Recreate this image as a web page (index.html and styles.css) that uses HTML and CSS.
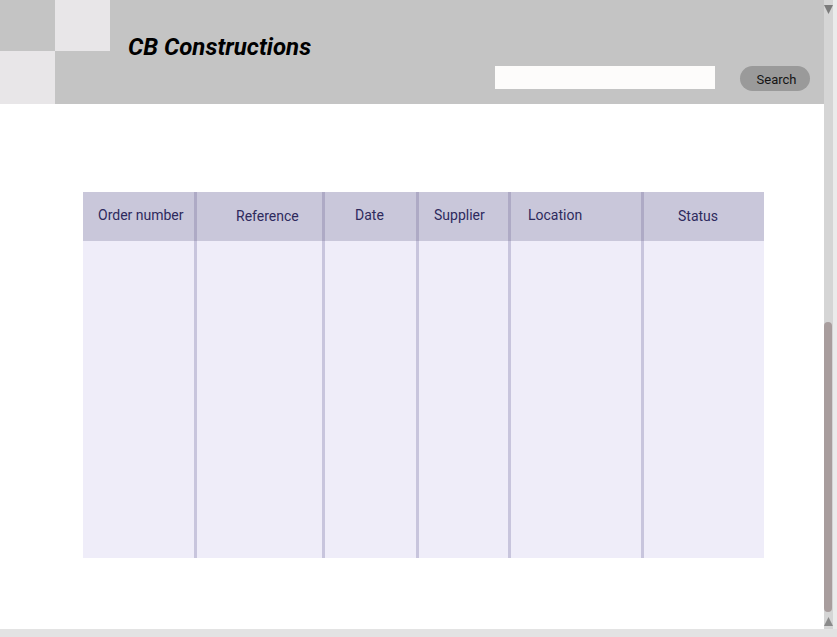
FILE: index.html
```html
<!DOCTYPE html>
<html lang="en">
<head>
<meta charset="utf-8">
<title>CB Constructions</title>
<link rel="stylesheet" href="styles.css">
</head>
<body>
<div class="app">
  <div class="viewport">
    <div class="page">
      <header class="topbar">
        <div class="logo">
          <span class="sq dark"></span><span class="sq light"></span>
          <span class="sq light"></span><span class="sq dark"></span>
        </div>
        <h1 class="brand">CB Constructions</h1>
        <form class="search">
          <input class="search-input" type="text" aria-label="Search">
          <button class="search-btn" type="button">Search</button>
        </form>
      </header>
      <main class="content">
        <div class="orders">
          <div class="col c1"><div class="th">Order number</div><div class="td"></div></div>
          <div class="col c2"><div class="th">Reference</div><div class="td"></div></div>
          <div class="col c3"><div class="th">Date</div><div class="td"></div></div>
          <div class="col c4"><div class="th">Supplier</div><div class="td"></div></div>
          <div class="col c5"><div class="th">Location</div><div class="td"></div></div>
          <div class="col c6"><div class="th">Status</div><div class="td"></div></div>
        </div>
      </main>
    </div>
    <div class="vscroll">
      <svg class="arrow arrow-top" width="9" height="9" viewBox="0 0 9 9"><polygon points="0,0 9,0 4.5,9" /></svg>
      <div class="track-space"></div>
      <div class="thumb"></div>
      <svg class="arrow arrow-bottom" width="9" height="9" viewBox="0 0 9 9"><polygon points="4.5,0 9,9 0,9" /></svg>
    </div>
  </div>
  <div class="hscroll"></div>
</div>
</body>
</html>
```
FILE: styles.css
```css
html, body {
  margin: 0;
  padding: 0;
  background: #ffffff;
}
body {
  font-family: Roboto, "Liberation Sans", Arial, sans-serif;
  width: 837px;
  height: 637px;
  overflow: hidden;
}
.app {
  display: flex;
  flex-direction: column;
  width: 837px;
  height: 637px;
}
.viewport {
  display: flex;
  height: 629px;
}
.page {
  width: 824px;
  display: flex;
  flex-direction: column;
  background: #ffffff;
}
.topbar {
  display: flex;
  align-items: flex-start;
  height: 104px;
  background: #c4c4c4;
}
.logo {
  display: grid;
  grid-template-columns: 55px 55px;
  grid-template-rows: 51px 53px;
}
.sq.dark { background: #c4c4c4; }
.sq.light { background: #e8e6e8; }
.brand {
  margin: 0 0 0 18px;
  padding-top: 33px;
  font-size: 24px;
  line-height: 28px;
  font-weight: 700;
  font-style: italic;
  color: #000000;
}
.search {
  margin: 66px 14px 0 auto;
  display: flex;
  align-items: flex-start;
  gap: 25px;
}
.search-input {
  box-sizing: border-box;
  width: 220px;
  height: 23px;
  border: none;
  padding: 0 6px;
  background: #fdfcfb;
  outline: none;
}
.search-btn {
  box-sizing: border-box;
  width: 70px;
  height: 25px;
  border: none;
  border-radius: 13px;
  background: #9a9a9a;
  color: #141414;
  font-family: Roboto, "Liberation Sans", Arial, sans-serif;
  font-size: 13px;
  line-height: 25px;
  padding: 1px 0 0 3px;
}
.content {
  flex: 1;
  padding: 88px 0 0 83px;
}
.orders {
  display: flex;
  width: 681px;
  height: 366px;
}
.col {
  display: flex;
  flex-direction: column;
}
.col + .col {
  border-left: 3px solid transparent;
  background:
    linear-gradient(#aeaac5, #aeaac5) left top / 3px 49px no-repeat,
    linear-gradient(#c8c5dd, #c8c5dd) left top / 3px 100% no-repeat;
  background-origin: border-box;
}
.th {
  box-sizing: border-box;
  height: 49px;
  line-height: 46px;
  font-size: 14px;
  color: #2e2a5d;
  background: #c9c7da;
  white-space: nowrap;
}
.td {
  flex: 1;
  background: #efedf9;
}
.c1 { width: 111px; }
.c1 .th { padding-left: 15px; }
.c2 { width: 125px; }
.c2 .th { padding-left: 39px; line-height: 48px; }
.c3 { width: 91px; }
.c3 .th { padding-left: 30px; }
.c4 { width: 89px; }
.c4 .th { padding-left: 15px; }
.c5 { width: 130px; }
.c5 .th { padding-left: 17px; }
.c6 { width: 120px; }
.c6 .th { padding-left: 34px; line-height: 48px; }
.vscroll {
  width: 13px;
  display: flex;
  flex-direction: column;
  background: linear-gradient(to right, #d5d5d5 0, #d5d5d5 9px, #ebebeb 9px, #ebebeb 13px);
}
.arrow {
  display: block;
  fill: #7c7c7c;
}
.arrow-top {
  margin-top: 5px;
  height: 9px;
}
.track-space {
  height: 308px;
}
.thumb {
  width: 8px;
  height: 290px;
  border-radius: 4px;
  background: #a89d9d;
}
.arrow-bottom {
  margin-top: 5px;
  fill: #8a8a8a;
}
.hscroll {
  height: 8px;
  background: #e3e3e3;
}
```
